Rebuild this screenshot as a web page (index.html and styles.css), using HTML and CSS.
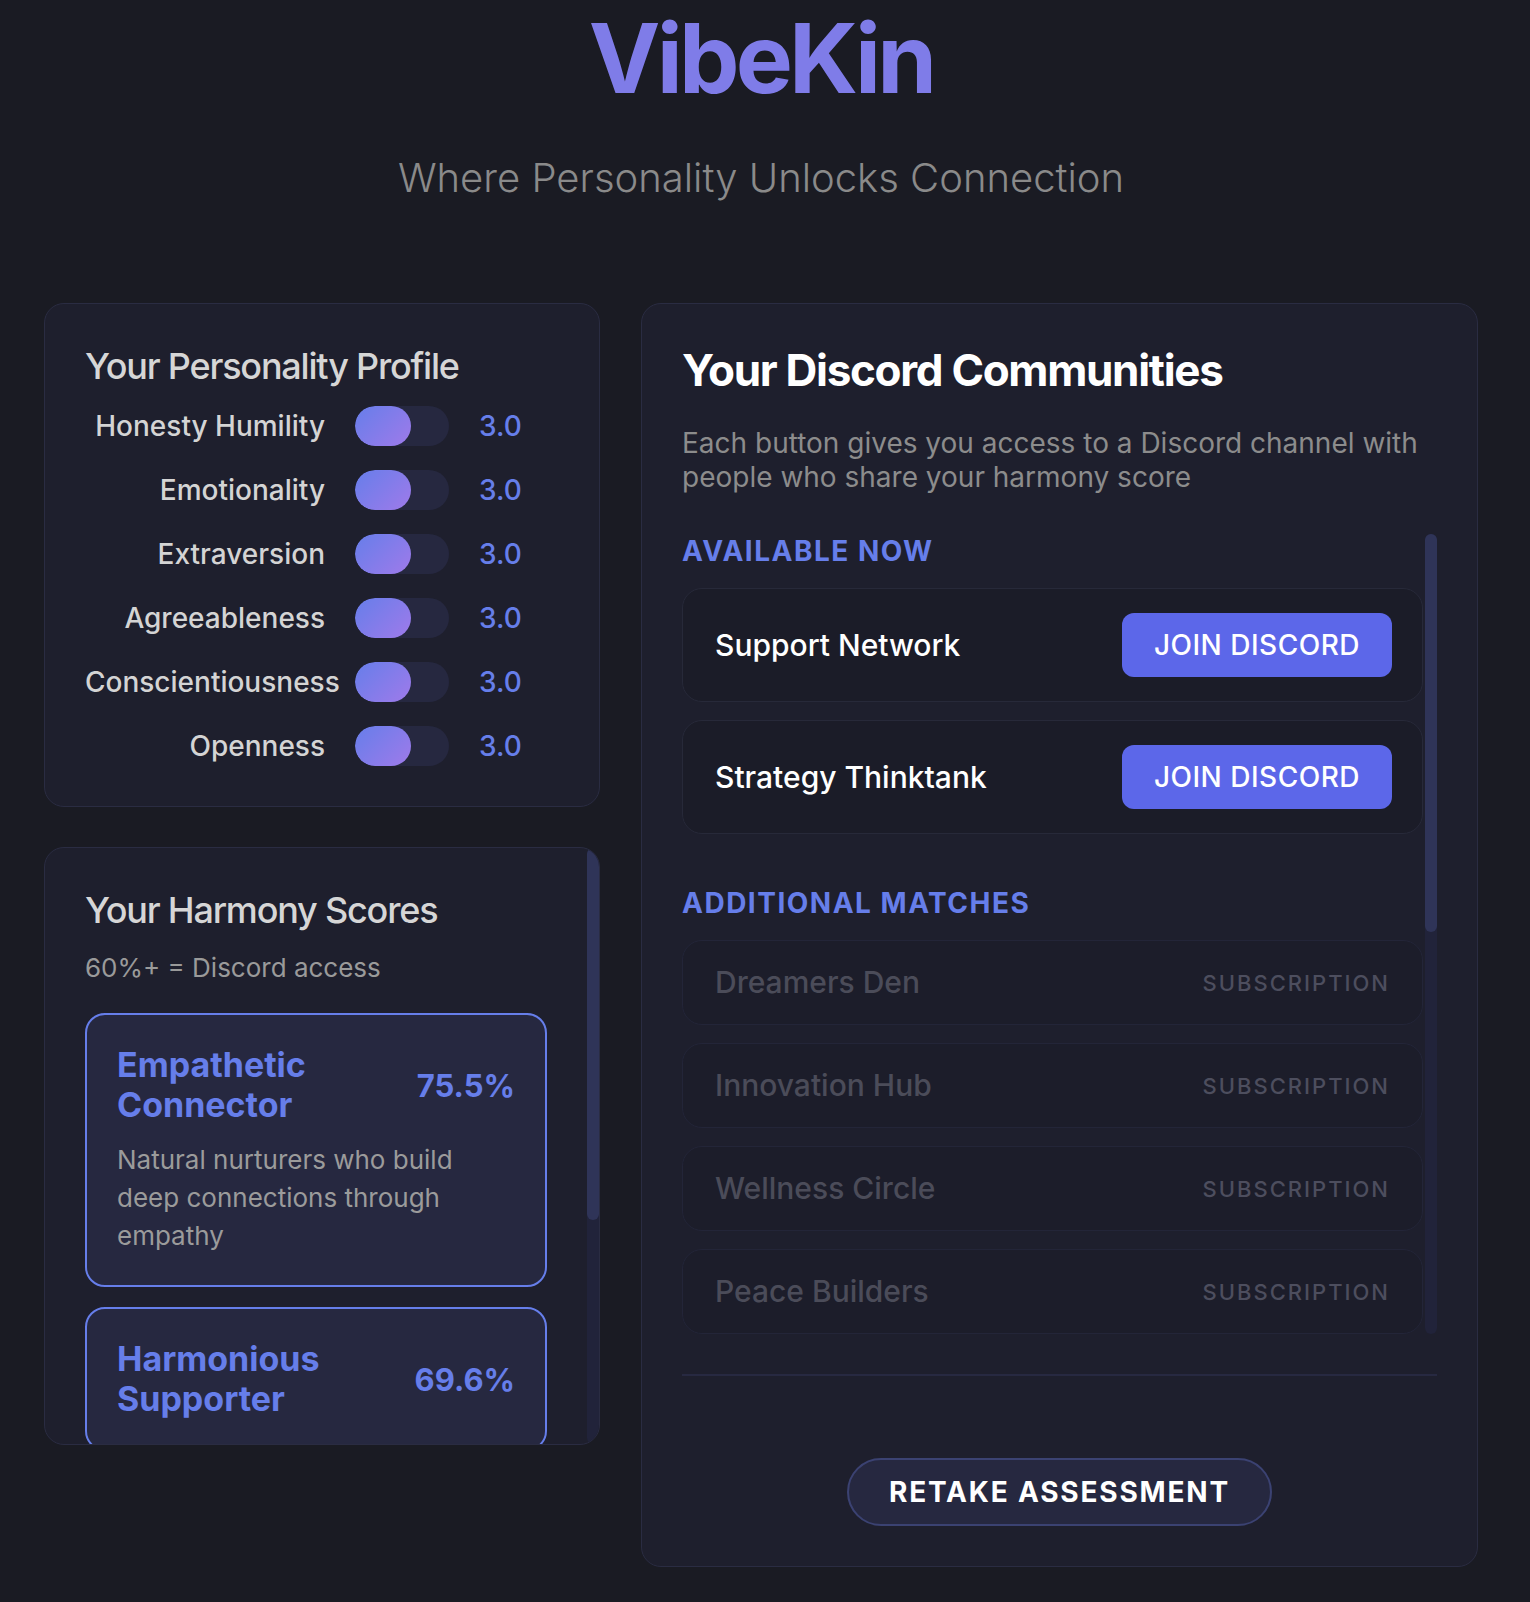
FILE: index.html
```html
<!DOCTYPE html>
<html lang="en">
<head>
<meta charset="utf-8">
<title>VibeKin</title>
<link rel="stylesheet" href="styles.css">
</head>
<body>
<header class="hero">
  <h1 class="brand">VibeKin</h1>
  <p class="tagline">Where Personality Unlocks Connection</p>
</header>
<main class="layout">
  <div class="left-col">
    <section class="card profile">
      <h2 class="card-title">Your Personality Profile</h2>
      <div class="traits">
        <div class="trait"><span class="trait-name">Honesty Humility</span><div class="bar"><div class="bar-fill" style="width:60%"></div></div><span class="trait-val">3.0</span></div>
        <div class="trait"><span class="trait-name">Emotionality</span><div class="bar"><div class="bar-fill" style="width:60%"></div></div><span class="trait-val">3.0</span></div>
        <div class="trait"><span class="trait-name">Extraversion</span><div class="bar"><div class="bar-fill" style="width:60%"></div></div><span class="trait-val">3.0</span></div>
        <div class="trait"><span class="trait-name">Agreeableness</span><div class="bar"><div class="bar-fill" style="width:60%"></div></div><span class="trait-val">3.0</span></div>
        <div class="trait"><span class="trait-name">Conscientiousness</span><div class="bar"><div class="bar-fill" style="width:60%"></div></div><span class="trait-val">3.0</span></div>
        <div class="trait"><span class="trait-name">Openness</span><div class="bar"><div class="bar-fill" style="width:60%"></div></div><span class="trait-val">3.0</span></div>
      </div>
    </section>
    <section class="card harmony">
      <div class="harmony-body">
        <h2 class="card-title">Your Harmony Scores</h2>
        <p class="card-sub">60%+ = Discord access</p>
        <div class="h-item">
          <div class="h-head"><h3 class="h-name">Empathetic Connector</h3><span class="h-pct">75.5%</span></div>
          <p class="h-desc">Natural nurturers who build deep connections through empathy</p>
        </div>
        <div class="h-item">
          <div class="h-head"><h3 class="h-name">Harmonious Supporter</h3><span class="h-pct">69.6%</span></div>
        </div>
      </div>
      <div class="scrollbar"><div class="thumb thumb-left"></div></div>
    </section>
  </div>
  <section class="card communities">
    <h2 class="comm-title">Your Discord Communities</h2>
    <p class="comm-desc">Each button gives you access to a Discord channel with people who share your harmony score</p>
    <div class="scroll-wrap">
      <div class="scroll-body">
        <div class="sec">
          <h3 class="sec-label">Available Now</h3>
          <div class="list">
            <div class="item"><span class="item-name">Support Network</span><button class="join">JOIN DISCORD</button></div>
            <div class="item"><span class="item-name">Strategy Thinktank</span><button class="join">JOIN DISCORD</button></div>
          </div>
        </div>
        <div class="sec">
          <h3 class="sec-label">Additional Matches</h3>
          <div class="list">
            <div class="item sub"><span class="item-name">Dreamers Den</span><span class="sub-tag">SUBSCRIPTION</span></div>
            <div class="item sub"><span class="item-name">Innovation Hub</span><span class="sub-tag">SUBSCRIPTION</span></div>
            <div class="item sub"><span class="item-name">Wellness Circle</span><span class="sub-tag">SUBSCRIPTION</span></div>
            <div class="item sub"><span class="item-name">Peace Builders</span><span class="sub-tag">SUBSCRIPTION</span></div>
          </div>
        </div>
      </div>
      <div class="scrollbar"><div class="thumb thumb-right"></div></div>
    </div>
    <div class="footer">
      <button class="retake">RETAKE ASSESSMENT</button>
    </div>
  </section>
</main>
</body>
</html>
```
FILE: styles.css
```css
* { box-sizing: border-box; }
html { background: #1a1b23; }
body {
  margin: 0;
  background: #1a1b23;
  font-family: Inter, "Noto Sans", "Liberation Sans", sans-serif;
  color: #e5e5e5;
}
.hero {
  text-align: center;
  padding: 0 52px 0 44px;
}
.brand {
  margin: 0;
  font-size: 96px;
  line-height: 116px;
  font-weight: 700;
  color: #7f7ce8;
  letter-spacing: -3.8px;
}
.tagline {
  margin: 38px 0 0;
  font-size: 40px;
  line-height: 48px;
  font-weight: 300;
  color: #8a8a8a;
}
.layout {
  display: grid;
  grid-template-columns: 556px 837px;
  column-gap: 41px;
  align-items: start;
  margin: 101px 52px 36px 44px;
}
.left-col {
  display: flex;
  flex-direction: column;
  gap: 40px;
}
.card {
  background: #1e1f2d;
  border: 1px solid #2a2c42;
  border-radius: 20px;
  padding: 40px;
}
.card-title {
  margin: 0;
  font-size: 36px;
  line-height: 44px;
  font-weight: 500;
  letter-spacing: -1.2px;
  color: #d6d6d6;
}
.traits {
  margin-top: 18px;
  display: flex;
  flex-direction: column;
  gap: 24px;
}
.trait {
  display: grid;
  grid-template-columns: 240px 94px auto;
  column-gap: 30px;
  align-items: center;
  height: 40px;
}
.trait-name {
  font-size: 28px;
  font-weight: 500;
  color: #d4d4d4;
  text-align: right;
  white-space: nowrap;
}
.bar {
  height: 40px;
  border-radius: 20px;
  background: #262840;
  overflow: hidden;
}
.bar-fill {
  height: 100%;
  border-radius: 20px;
  background: linear-gradient(135deg, #667eea 0%, #9f7aea 100%);
}
.trait-val {
  font-size: 28px;
  font-weight: 500;
  color: #667eea;
}

/* harmony card with its scroll track */
.harmony {
  display: flex;
  height: 598px;
  overflow: hidden;
  padding: 0;
}
.harmony-body {
  flex: 1;
  min-width: 0;
  padding: 40px;
}
.scrollbar {
  width: 12px;
  flex-shrink: 0;
  background: #21233a;
  border-radius: 6px;
}
.thumb {
  background: #2f3458;
  border-radius: 6px;
}
.thumb-left { height: 372px; }
.thumb-right { height: 398px; }

.card-sub {
  margin: 20px 0 30px;
  font-size: 26px;
  line-height: 31px;
  color: #9a9a9a;
}
.h-item {
  background: #262840;
  border: 2px solid #667eea;
  border-radius: 20px;
  padding: 30px;
}
.h-item + .h-item { margin-top: 20px; }
.h-head {
  display: flex;
  align-items: center;
  justify-content: space-between;
  gap: 20px;
}
.h-name {
  margin: 0;
  font-size: 34px;
  line-height: 40px;
  font-weight: 700;
  color: #667eea;
}
.h-pct {
  flex-shrink: 0;
  font-size: 31px;
  font-weight: 700;
  color: #667eea;
}
.h-desc {
  margin: 16px 0 0;
  font-size: 26px;
  line-height: 38px;
  color: #9b9b9b;
}

/* communities */
.comm-title {
  margin: 0;
  font-size: 44px;
  line-height: 53px;
  font-weight: 700;
  letter-spacing: -1.3px;
  color: #ffffff;
}
.comm-desc {
  margin: 29px 0 40px;
  font-size: 28px;
  line-height: 34px;
  color: #8c8c8c;
}
.scroll-wrap {
  display: flex;
  height: 800px;
}
.scroll-body {
  flex: 1;
  min-width: 0;
  overflow: hidden;
  padding-right: 2px;
}
.sec + .sec { margin-top: 52px; }
.sec-label {
  margin: 0 0 20px;
  font-size: 28px;
  line-height: 34px;
  font-weight: 700;
  letter-spacing: 1.5px;
  text-transform: uppercase;
  color: #667eea;
}
.list {
  display: flex;
  flex-direction: column;
  gap: 18px;
}
.item {
  display: flex;
  align-items: center;
  justify-content: space-between;
  background: #1b1c28;
  border: 1px solid #272939;
  border-radius: 20px;
  padding: 24px 30px 24px 32px;
}
.item-name {
  font-size: 30px;
  line-height: 35px;
  font-weight: 500;
  color: #ffffff;
}
.join {
  background: #5c67e9;
  color: #ffffff;
  border: none;
  border-radius: 12px;
  font-family: inherit;
  font-size: 28px;
  line-height: 34px;
  font-weight: 500;
  letter-spacing: 0.5px;
  padding: 15px 32px;
}
.item.sub {
  background: #1c1d2a;
  border-color: #232538;
  padding: 24px 32px;
}
.item.sub .item-name { color: #4b4c59; }
.sub-tag {
  font-size: 22px;
  font-weight: 500;
  letter-spacing: 2px;
  color: #4d4e5e;
}
.footer {
  margin-top: 40px;
  border-top: 2px solid #272941;
  padding-top: 82px;
  text-align: center;
}
.retake {
  background: #262840;
  color: #ffffff;
  border: 2px solid #3b4272;
  border-radius: 34px;
  font-family: inherit;
  font-size: 28px;
  line-height: 34px;
  font-weight: 700;
  letter-spacing: 1.8px;
  padding: 15px 40px;
}
```
